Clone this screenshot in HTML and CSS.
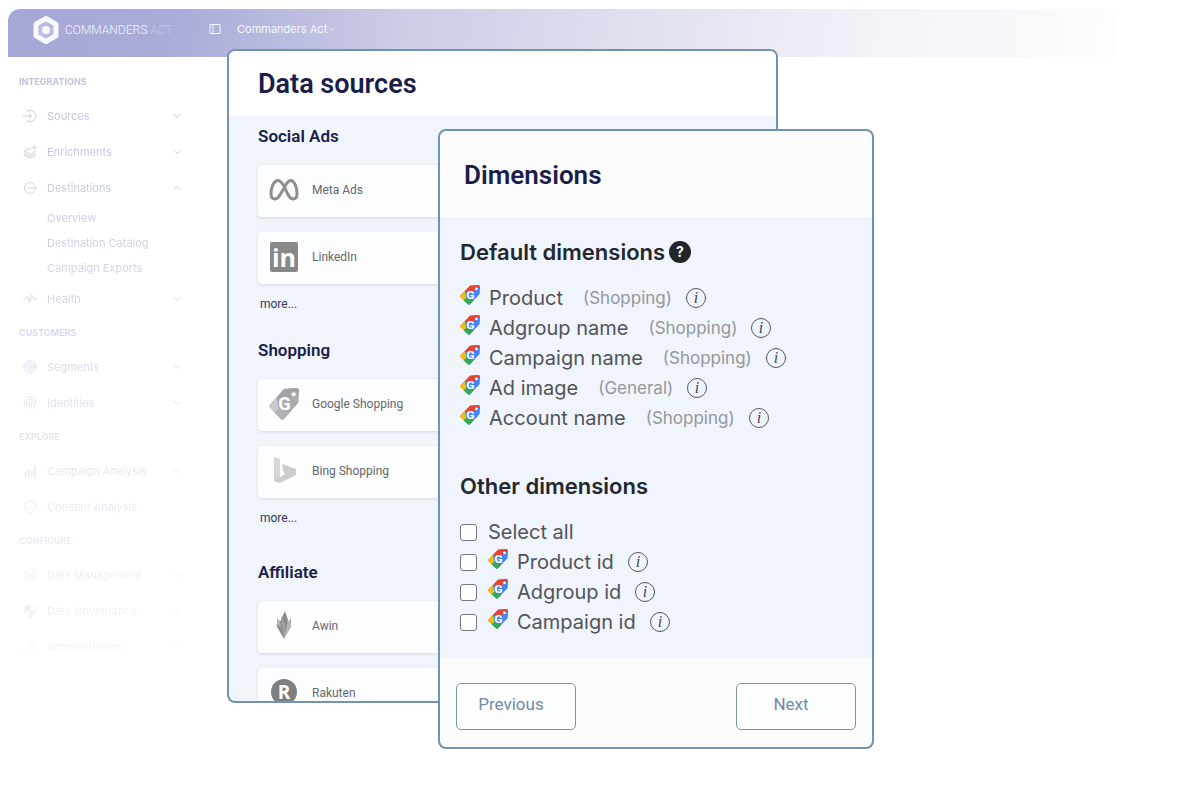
FILE: index.html
```html
<!doctype html>
<html lang="en">
    <head>
        <meta charset="UTF-8" />
        <meta name="viewport" content="width=device-width, initial-scale=1.0" />
        <title>Commanders Act</title>
        <link rel="stylesheet" href="styles.css">
    </head>
    <body>
        <!-- Shared icons -->
        <svg class="sprite" aria-hidden="true">
            <symbol id="chevron" viewBox="0 0 8 8"><path d="M1 2.5 4 5.5 7 2.5" /></symbol>
            <symbol id="sources" viewBox="0 0 16 16"><path d="M5 2.700A6.300 6.300 0 1 1 5 13.300M0.500 8h9M7 5.500 9.500 8 7 10.500" /></symbol>
            <symbol id="enrich" viewBox="0 0 16 16"><path d="M9 4 8 3.5 1.5 7 8 10.500 14.500 7M1.500 9.500 8 13l6.500-3.500M1.500 11.500 8 15l6.500-3.500M13 1v4M11 3h4" /></symbol>
            <symbol id="dest" viewBox="0 0 16 16"><path d="M13 4.200A6.300 6.300 0 1 0 13 11.800M6 8h9M13 5.800 15.200 8 13 10.200" /></symbol>
            <symbol id="health" viewBox="0 0 16 16"><path d="M0 8h3l2-3 2.500 7L10 3l2 5h4" /></symbol>
            <symbol id="segments" viewBox="0 0 16 16"><circle cx="8" cy="8" r="7" /><circle cx="8" cy="8" r="4.500" /><circle cx="8" cy="8" r="2" /></symbol>
            <symbol id="identities" viewBox="0 0 16 16"><path d="M2 12C.5 8 1 1 8 1s7 6 6.500 9M4 13c.5-2-.5-4 0-6 1-4 7-4 8 0 .3 2 .5 4 1 6M6.500 14c.8-2 0-4 .3-6 .4-1.500 2.200-1.500 2.500 0 .4 2-.3 4 1.200 7" /></symbol>
            <symbol id="bars" viewBox="0 0 16 16"><path stroke-width="2" stroke-linecap="butt" d="M3 15V9M6.500 15V6M10 15V8M13.500 15V2" /></symbol>
            <symbol id="consent" viewBox="0 0 16 16"><path d="M8 1c2 1.500 4 2 6.500 2 .5 5.500-1 9.500-6.500 12C2.500 12.500 1 8.500 1.500 3 4 3 6 2.500 8 1zM5 7.800l2.200 2.200L11 6" /></symbol>
            <symbol id="layers" viewBox="0 0 16 16"><path d="M8 1 1.500 4.500 8 8l6.500-3.500zM1.500 7 8 10.500 14.500 7M1.500 9.500 8 13l6.500-3.500M1.500 12 8 15.300 14.500 12" /></symbol>
            <symbol id="shield" viewBox="0 0 16 16"><path d="M8 1c2 1.500 4 2 6 2 .5 5.500-1 9.500-6 12C3 12.500 1.500 8.500 2 3c2 0 4-.5 6-2z" /><path fill="currentColor" d="M8 1v7H2V3zM8 8h6c-.5 3-2.500 5.500-6 7z" /></symbol>
            <symbol id="wrench" viewBox="0 0 16 16"><path d="M14.500 4.500 12 7 9.500 6.500 9 4l2.500-2.500C8 0 5 3 6 6.500L1.500 11c-2 2 1 5 3 3L9 9.500c3.500 1.200 7-1.500 5.500-5z" /></symbol>
            <symbol id="tag" viewBox="0 0 28 31" preserveAspectRatio="none">
                <path class="tag-blue" d="M14 1 25 0q3 0 3 3l-.5 11L14 30q-1.500 1.500-3 0L1 19q-1.500-1.500 0-3z" />
                <path class="tag-red" d="M14 1 25 0q3 0 3 3L20 9 6 11z" />
                <path class="tag-yellow" d="M7 9.500 9 21 5 23.500 1 19q-1.500-1.500 0-3z" />
                <path class="tag-green" d="M5 23.500 9 20l10 4-5 6q-1.500 1.500-3 0z" />
                <circle cx="23" cy="6" r="2" fill="#fff" />
                <text x="14.500" y="21.500" text-anchor="middle" class="tag-letter">G</text>
            </symbol>
            <symbol id="info" viewBox="0 0 22 22">
                <circle cx="11" cy="11" r="9.500" />
                <text x="11" y="16" text-anchor="middle" class="info-letter">i</text>
            </symbol>
        </svg>

        <div class="app">
            <header class="topbar">
                <a class="brand" href="#">
                    <svg width="28" height="30" viewBox="0 0 28 30">
                        <path d="M14 3.500 24 9.200v11.600L14 26.500 4 20.800V9.200z" fill="#b9bbe0" stroke="#f6f9ff" stroke-width="5" stroke-linejoin="round" />
                        <circle cx="14" cy="15" r="4" fill="#f6f9ff" />
                    </svg>
                    <span>COMMANDERS <span class="brand-end">ACT</span></span>
                </a>
                <button class="toggle" type="button" aria-label="Toggle sidebar">
                    <svg width="12" height="12" viewBox="0 0 12 12"><path d="M1 1.500h10v9H1zM4 1.500v9" fill="none" stroke="currentColor" /></svg>
                </button>
                <button class="account" type="button">Commanders Act <svg class="caret"><use href="#chevron" /></svg></button>
            </header>

            <nav class="sidebar">
                <h2>INTEGRATIONS</h2>
                <a class="item" href="#"><svg class="icon"><use href="#sources" /></svg>Sources<svg class="arrow"><use href="#chevron" /></svg></a>
                <a class="item" href="#"><svg class="icon"><use href="#enrich" /></svg>Enrichments<svg class="arrow"><use href="#chevron" /></svg></a>
                <a class="item" href="#"><svg class="icon"><use href="#dest" /></svg>Destinations<svg class="arrow open"><use href="#chevron" /></svg></a>
                <a class="subitem" href="#">Overview</a>
                <a class="subitem" href="#">Destination Catalog</a>
                <a class="subitem" href="#">Campaign Exports</a>
                <a class="item" href="#"><svg class="icon"><use href="#health" /></svg>Health<svg class="arrow"><use href="#chevron" /></svg></a>
                <h2>CUSTOMERS</h2>
                <a class="item" href="#"><svg class="icon"><use href="#segments" /></svg>Segments<svg class="arrow"><use href="#chevron" /></svg></a>
                <a class="item" href="#"><svg class="icon"><use href="#identities" /></svg>Identities<svg class="arrow"><use href="#chevron" /></svg></a>
                <h2>EXPLORE</h2>
                <a class="item" href="#"><svg class="icon"><use href="#bars" /></svg>Campaign Analysis<svg class="arrow"><use href="#chevron" /></svg></a>
                <a class="item" href="#"><svg class="icon"><use href="#consent" /></svg>Consent Analysis</a>
                <h2>CONFIGURE</h2>
                <a class="item" href="#"><svg class="icon"><use href="#layers" /></svg>Data Management<svg class="arrow"><use href="#chevron" /></svg></a>
                <a class="item" href="#"><svg class="icon"><use href="#shield" /></svg>Data Governance<svg class="arrow"><use href="#chevron" /></svg></a>
                <a class="item" href="#"><svg class="icon"><use href="#wrench" /></svg>Administration<svg class="arrow"><use href="#chevron" /></svg></a>
            </nav>
        </div>

        <section class="window sources">
            <h1>Data sources</h1>
            <div class="sources-body">
                <div class="group">
                    <h3>Social Ads</h3>
                    <a class="card" href="#">
                        <svg class="logo" viewBox="0 0 30 32"><path d="M15 12C12.500 8 11 6.500 9 6.500c-4 0-7 6.500-7 13C2 23 3.500 25 6 25c3.500 0 5.500-5 9-11 2-4 4-7.500 6.500-7.500 4 0 6.500 7 6.500 13 0 3.500-1.500 5.500-4 5.500-4 0-6-7-9-13z" fill="none" stroke="#8e8f91" stroke-width="3" /></svg>
                        Meta Ads
                    </a>
                    <a class="card" href="#">
                        <svg class="logo" viewBox="0 0 30 32"><rect x="1" y="1" width="28" height="30" rx="2" fill="#86888a" /><text x="15" y="26" text-anchor="middle" class="linkedin-letters">in</text></svg>
                        LinkedIn
                    </a>
                    <a class="more" href="#">more...</a>
                </div>
                <div class="group">
                    <h3>Shopping</h3>
                    <a class="card" href="#">
                        <svg class="logo tag-gray"><use href="#tag" /></svg>
                        Google Shopping
                    </a>
                    <a class="card" href="#">
                        <svg class="logo" viewBox="0 0 30 32"><path d="M5 2l6 2v18l-6 5z" fill="#d5d6d8" /><path d="M13 9l14 5v6L11 28l-6-2 11-7-2-4z" fill="#cbccce" /></svg>
                        Bing Shopping
                    </a>
                    <a class="more" href="#">more...</a>
                </div>
                <div class="group group-last">
                    <h3>Affiliate</h3>
                    <a class="card" href="#">
                        <svg class="logo" viewBox="0 0 30 32"><path d="M8 8l5 5 2 16L8 17zM22 8l-4 5-3 16 7-12z" fill="#b5b5b5" /><path d="M16 1l3 9-4 19-4-17zM7 14l5 3 3 12z" fill="#8a8a8a" /><path d="M12 5l4 9-1 15z" fill="#a5a5a5" /></svg>
                        Awin
                    </a>
                    <a class="card" href="#">
                        <svg class="logo" viewBox="0 0 30 32"><circle cx="15" cy="15" r="13" fill="#7d7f82" /><text x="15" y="22" text-anchor="middle" class="rakuten-letter">R</text></svg>
                        Rakuten
                    </a>
                </div>
            </div>
        </section>

        <section class="window dimensions">
            <h1>Dimensions</h1>
            <div class="dimensions-body">
                <h3>Default dimensions
                    <svg class="help" viewBox="0 0 22 22"><circle cx="11" cy="11" r="11" fill="#212529" /><text x="11" y="16" text-anchor="middle">?</text></svg>
                </h3>
                <ul>
                    <li><svg class="tag"><use href="#tag" /></svg>Product <span class="kind">(Shopping)</span><svg class="info"><use href="#info" /></svg></li>
                    <li><svg class="tag"><use href="#tag" /></svg>Adgroup name <span class="kind">(Shopping)</span><svg class="info"><use href="#info" /></svg></li>
                    <li><svg class="tag"><use href="#tag" /></svg>Campaign name <span class="kind">(Shopping)</span><svg class="info"><use href="#info" /></svg></li>
                    <li><svg class="tag"><use href="#tag" /></svg>Ad image <span class="kind">(General)</span><svg class="info"><use href="#info" /></svg></li>
                    <li><svg class="tag"><use href="#tag" /></svg>Account name <span class="kind">(Shopping)</span><svg class="info"><use href="#info" /></svg></li>
                </ul>
                <h3>Other dimensions</h3>
                <ul>
                    <li><input type="checkbox" id="all" /><label for="all">Select all</label></li>
                    <li><input type="checkbox" id="product" /><label for="product"><svg class="tag"><use href="#tag" /></svg>Product id</label><svg class="info"><use href="#info" /></svg></li>
                    <li><input type="checkbox" id="adgroup" /><label for="adgroup"><svg class="tag"><use href="#tag" /></svg>Adgroup id</label><svg class="info"><use href="#info" /></svg></li>
                    <li><input type="checkbox" id="campaign" /><label for="campaign"><svg class="tag"><use href="#tag" /></svg>Campaign id</label><svg class="info"><use href="#info" /></svg></li>
                </ul>
            </div>
            <footer>
                <button type="button">Previous</button>
                <button type="button">Next</button>
            </footer>
        </section>
    </body>
</html>
```
FILE: styles.css
```css
* {
    box-sizing: border-box;
}
body {
    position: relative;
    margin: 0;
    padding: 9px 84px 0 8px;
    min-height: 100vh;
    font-family: Roboto, sans-serif;
    background-color: #fff;
}
a {
    color: inherit;
    text-decoration: none;
}
button {
    font-family: inherit;
    cursor: pointer;
}
h1,
h2,
h3,
ul {
    margin: 0;
    padding: 0;
}
svg {
    flex: none;
}
.sprite {
    display: none;
}

/* Application in the background */
.topbar {
    display: flex;
    align-items: center;
    height: 48px;
    padding: 0 24px;
    border-radius: 12px 12px 0 0;
    background: linear-gradient(100deg, #a5a7d6 0%, #a9abd9 15%, #cccde6 36%, #e5e6f2 63%, #f2f2f8 78%, #fdfdfe 100%);
    color: #f4f6fd;
}
.brand {
    display: flex;
    align-items: center;
    gap: 5px;
    width: 177px;
    padding-bottom: 7px;
    font-size: 12px;
    font-weight: 300;
}
.brand-end {
    color: #c5c7e4;
}
.toggle,
.account {
    display: flex;
    align-items: center;
    padding: 0 0 8px;
    border: none;
    background: none;
    color: inherit;
}
.account {
    gap: 2px;
    margin-left: 16px;
    font-family: Inter, sans-serif;
    font-size: 11px;
}
.caret {
    width: 6px;
    height: 6px;
}
.caret,
.arrow,
.icon {
    fill: none;
    stroke: currentColor;
    stroke-linecap: round;
    stroke-linejoin: round;
}
.sidebar {
    width: 194px;
    padding: 9px 21px 24px 11px;
    font-family: Inter, sans-serif;
    font-size: 11px;
    color: #bfc0df;
    -webkit-mask-image: linear-gradient(#000, rgba(0, 0, 0, 0.65) 40%, rgba(0, 0, 0, 0.35) 67%, rgba(0, 0, 0, 0.15));
    mask-image: linear-gradient(#000, rgba(0, 0, 0, 0.65) 40%, rgba(0, 0, 0, 0.35) 67%, rgba(0, 0, 0, 0.15));
}
.sidebar h2 {
    font-size: 9px;
    line-height: 32px;
}
.item {
    display: flex;
    align-items: center;
    height: 36px;
    padding-left: 4px;
}
.icon {
    width: 14px;
    height: 14px;
    margin-right: 10px;
}
.arrow {
    width: 8px;
    height: 8px;
    margin-left: auto;
}
.arrow.open {
    transform: rotate(180deg);
}
.subitem {
    display: block;
    padding-left: 28px;
    line-height: 25px;
}

/* Windows over the application */
.window {
    position: absolute;
    overflow: hidden;
    border: 2px solid #7192b2;
    border-radius: 8px;
    color: #1b1e4b;
}
.window h1 {
    padding-top: 2px;
    font-size: 27px;
    font-weight: 600;
}
.window ul {
    list-style: none;
}
.sources {
    top: 49px;
    left: 227px;
    width: 551px;
    height: 654px;
    background-color: #f0f4fb;
}
.sources h1 {
    padding-left: 29px;
    line-height: 63px;
    background-color: #fff;
}
.sources-body {
    display: flex;
    flex-direction: column;
    gap: 24px;
    padding: 8px 29px;
}
.group-last {
    padding-top: 8px;
}
.group h3 {
    margin-bottom: 17px;
    font-size: 17px;
    font-weight: 600;
    line-height: 24px;
}
.card {
    display: flex;
    align-items: center;
    gap: 13px;
    height: 52px;
    margin-bottom: 15px;
    padding: 0 0 2px 11px;
    border-radius: 4px;
    background-color: #fcfdfe;
    box-shadow: 0 1px 3px rgba(60, 70, 90, 0.15);
    color: #66686b;
    font-size: 12px;
}
.logo {
    width: 30px;
    height: 32px;
}
.more {
    display: block;
    margin-top: -5px;
    padding-left: 2px;
    color: #33375c;
    font-size: 12px;
    line-height: 20px;
}
.linkedin-letters {
    fill: #fff;
    font: bold 25px "Open Sans", sans-serif;
}
.rakuten-letter {
    fill: #fff;
    font: bold 19px "Open Sans", sans-serif;
}

.dimensions {
    top: 129px;
    left: 438px;
    width: 436px;
    background-color: #fbfbfc;
}
.dimensions h1 {
    padding-left: 24px;
    font-size: 26px;
    line-height: 84px;
}
.dimensions-body {
    padding: 20px 20px 21px;
    background-color: #f0f4fc;
    color: #50535a;
    font-family: Inter, sans-serif;
    font-size: 20px;
}
.dimensions h3 {
    display: flex;
    align-items: center;
    gap: 4px;
    color: #24272e;
    font-size: 22px;
    font-weight: 600;
    line-height: 30px;
}
.dimensions ul {
    margin-top: 16px;
}
.dimensions ul + h3 {
    margin-top: 38px;
}
.dimensions li,
.dimensions label {
    display: flex;
    align-items: center;
    height: 30px;
}
.tag {
    width: 20px;
    height: 20px;
    margin: 0 9px 7px 0;
}
.tag-blue {
    fill: var(--blue, #4285f4);
}
.tag-red {
    fill: var(--red, #e64335);
}
.tag-yellow {
    fill: var(--yellow, #fbbc05);
}
.tag-green {
    fill: var(--green, #34a853);
}
.tag-gray {
    --blue: #a9abad;
    --red: #a0a2a4;
    --yellow: #c9cacc;
    --green: #b0b2b4;
}
.tag-letter {
    fill: #fff;
    font: bold 17px Roboto, sans-serif;
}
.kind {
    margin-left: 20px;
    color: #94979c;
    font-size: 17px;
}
.info {
    width: 22px;
    height: 22px;
    margin-left: 13px;
    fill: none;
    stroke: #54575e;
}
.info-letter {
    fill: #45484f;
    stroke: none;
    font: italic 16px "Liberation Serif", serif;
}
.help {
    width: 22px;
    height: 22px;
}
.help text {
    fill: #fff;
    font: bold 14px Inter, sans-serif;
}
.dimensions input {
    appearance: none;
    width: 17px;
    height: 17px;
    margin: 0 11px 0 0;
    border: 1px solid #74777c;
    border-radius: 3px;
    background-color: #fff;
}
.dimensions input:checked {
    background-color: #7192b2;
}
.dimensions footer {
    display: flex;
    justify-content: space-between;
    padding: 25px 16px 17px;
}
.dimensions footer button {
    width: 120px;
    height: 47px;
    padding: 0 10px 6px 0;
    border: 1px solid #7d93ac;
    border-radius: 5px;
    background-color: #fcfdfd;
    color: #7289ac;
    font-size: 17px;
}
```
